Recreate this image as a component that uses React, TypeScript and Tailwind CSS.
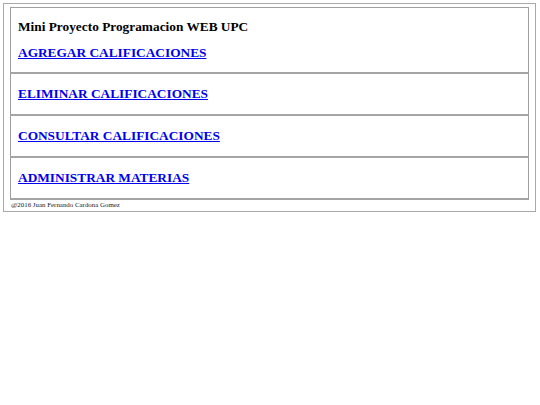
const links = [
	"ELIMINAR CALIFICACIONES",
	"CONSULTAR CALIFICACIONES",
	"ADMINISTRAR MATERIAS",
];

function MenuLink({ label }: { label: string }) {
	return (
		<a
			href="#"
			className="font-bold text-[13.33px] leading-[15px] text-[#0000ee] underline underline-offset-[1px]"
		>
			{label}
		</a>
	);
}

export default function App() {
	return (
		<div className="bg-white min-h-[405px] pt-[3px] pl-[3px] font-['Liberation_Serif',serif] text-black">
			<div className="w-[533px] border border-[#a9a9a9] pt-[3px] pb-[2px] pl-[6px] pr-[6px]">
				<div className="w-[519px] border border-[#a0a0a0] border-b-0">
					<div className="h-[66px] pt-[11px] pl-[7px] border-b-2 border-[#a4a4a4] flex flex-col gap-[6px]">
						<div className="font-bold text-[13.33px] leading-[15px]">
							Mini Proyecto Programacion WEB UPC
						</div>
						<div>
							<MenuLink label="AGREGAR CALIFICACIONES" />
						</div>
					</div>
					{links.map((l) => (
						<div
							key={l}
							className="h-[42px] pt-[7px] pl-[7px] border-b-2 border-[#a4a4a4]"
						>
							<MenuLink label={l} />
						</div>
					))}
				</div>
				<div className="text-[6.9px] leading-[8px] pl-[1px] pt-[1px] text-[#222]">
					@2016 Juan Fernando Cardona Gomez
				</div>
			</div>
		</div>
	);
}
